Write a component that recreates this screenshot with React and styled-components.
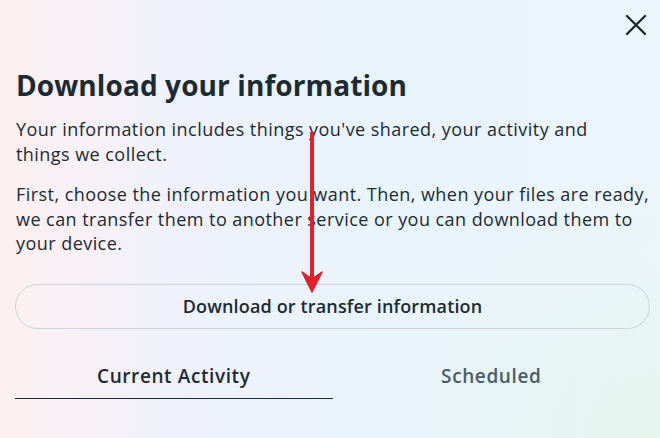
import React from 'react';
import styled, { createGlobalStyle } from 'styled-components';

const GlobalStyle = createGlobalStyle`
  html, body {
    margin: 0;
    padding: 0;
  }
  body {
    font-family: "Open Sans", "Noto Sans", sans-serif;
    color: #1c2b33;
  }
`;

const Page = styled.div`
  position: relative;
  width: 660px;
  height: 438px;
  overflow: hidden;
  box-sizing: border-box;
  padding: 0 10px 0 15px;
  background:
    radial-gradient(circle at 100% 100%, rgba(226, 246, 236, 0.9), rgba(226, 246, 236, 0) 35%),
    linear-gradient(90deg, #fdf0f1 0%, #f0f1fa 25%, #e9f3fc 55%, #edf5fc 100%);
`;

const TopBar = styled.div`
  display: flex;
  justify-content: flex-end;
  padding: 12px 1px 0 0;
  height: 66px;
  box-sizing: border-box;
`;

const CloseButton = styled.button`
  width: 26px;
  height: 26px;
  padding: 0;
  border: 0;
  background: none;
  display: flex;
  align-items: center;
  justify-content: center;
  cursor: pointer;
`;

const Title = styled.h1`
  margin: 0 0 0 1px;
  font-size: 28px;
  line-height: 38px;
  font-weight: 700;
  letter-spacing: 0.1px;
`;

const Para = styled.p`
  margin: ${p => (p.$first ? '13px' : '16px')} 0 0 1px;
  font-size: 18px;
  line-height: 24.5px;
  font-weight: 400;
  letter-spacing: 0.45px;
`;

const PillButton = styled.button`
  display: flex;
  align-items: center;
  justify-content: center;
  width: 100%;
  height: 45px;
  margin-top: 28px;
  border: 1px solid #cdd3d9;
  border-radius: 23px;
  background: transparent;
  font-family: inherit;
  font-size: 18px;
  font-weight: 600;
  letter-spacing: 0.15px;
  color: #1c2b33;
`;

const Tabs = styled.div`
  display: flex;
  margin-top: 25px;
`;

const Tab = styled.div`
  flex: 1;
  display: flex;
  justify-content: center;
  align-items: center;
  height: 44px;
  font-size: 19px;
  font-weight: 600;
  letter-spacing: 0.6px;
  color: ${p => (p.$active ? '#1c2b33' : '#4b5c6b')};
  border-bottom: 1.5px solid ${p => (p.$active ? '#1c2b33' : 'transparent')};
`;

const Arrow = styled.svg`
  position: absolute;
  left: 301px;
  top: 132px;
`;

export default function App() {
  return (
    <>
      <GlobalStyle />
      <Page>
        <TopBar>
          <CloseButton aria-label="Close">
            <svg width="24" height="24" viewBox="0 0 24 24">
              <path d="M3 3 L21 21 M21 3 L3 21" stroke="#1c2b33" strokeWidth="2.4" strokeLinecap="round" />
            </svg>
          </CloseButton>
        </TopBar>
        <Title>Download your information</Title>
        <Para $first>
          Your information includes things you've shared, your activity and<br />
          things we collect.
        </Para>
        <Para>
          First, choose the information you want. Then, when your files are ready, we can transfer them to another service or you can download them to your device.
        </Para>
        <PillButton>Download or transfer information</PillButton>
        <Tabs>
          <Tab $active>Current Activity</Tab>
          <Tab>Scheduled</Tab>
        </Tabs>
        <Arrow width="22" height="162" viewBox="0 0 22 162">
          <rect x="9" y="0" width="4" height="150" fill="#e3202b" />
          <path d="M1 140 L11 160 L21 140 L11 147 Z" fill="#e3202b" stroke="#e3202b" strokeWidth="1.5" strokeLinejoin="round" />
        </Arrow>
      </Page>
    </>
  );
}
